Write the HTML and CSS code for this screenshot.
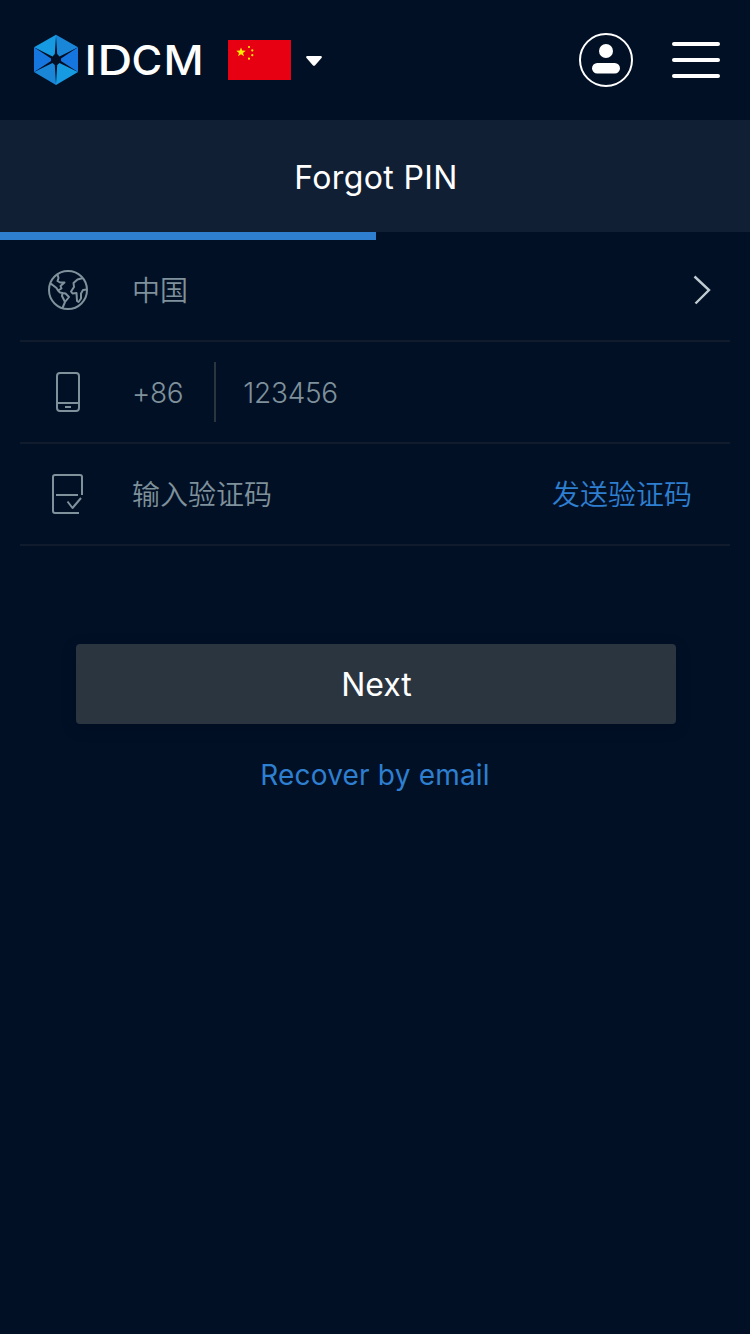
FILE: index.html
```html
<!DOCTYPE html>
<html lang="zh">
<head>
<meta charset="utf-8">
<title>Forgot PIN</title>
<link rel="stylesheet" href="styles.css">
</head>
<body>
<header class="header">
  <svg class="logo" width="172" height="52" viewBox="0 0 172 52">
    <path fill="#169be2" d="M24 .8V26L2 13.300Z"/>
    <path fill="#1a86d8" d="M24 .8L46 13.300L24 26Z"/>
    <path fill="#1676df" d="M2 13.300L24 26L2 38Z"/>
    <path fill="#1676df" d="M46 13.300L24 26L46 38Z"/>
    <path fill="#1a86d8" d="M24 51L2 38L24 26Z"/>
    <path fill="#169be2" d="M24 51L46 38L24 26Z"/>
    <path fill="#020f25" d="M24 2L25.200 20L27.500 22.500L45.500 13.500L29 24.500V27L45.500 37.800L27.500 29L25.200 31L24 50L22.800 31L20.500 29L2.500 37.800L19 27V24.500L2.500 13.500L20.500 22.500L22.800 20Z"/>
    <g class="wordmark">
      <text transform="translate(52.600 41) scale(1.1 1)">I</text>
      <text transform="translate(65.500 41) scale(1.16 1)">D</text>
      <text transform="translate(99.600 41) scale(1.01 1)">C</text>
      <text transform="translate(131.400 41) scale(1.06 1)">M</text>
    </g>
  </svg>
  <svg class="flag" width="63" height="40" viewBox="0 0 63 40">
    <path fill="#e60012" d="M0 0H63V40H0Z"/>
    <g fill="#ffec00">
      <path d="M13 7.500L14.200 10.600L17.700 10.700L15 12.900L16 16.200L13 14.300L10 16.200L11 12.900L8.300 10.700L11.800 10.600Z"/>
      <circle cx="21" cy="7" r="1.100"/><circle cx="24.300" cy="10.400" r="1.100"/><circle cx="24.300" cy="15.200" r="1.100"/><circle cx="21" cy="18.700" r="1.100"/>
    </g>
  </svg>
  <svg class="caret" width="16" height="11" viewBox="0 0 16 11"><path fill="#fff" d="M1 0H15Q16.500 .6 15.500 2L9.200 9.300Q8 10.400 6.800 9.300L.5 2Q-.5 .6 1 0Z"/></svg>
  <svg class="user" width="54" height="54" viewBox="0 0 54 54">
    <circle cx="27" cy="27" r="26" fill="none" stroke="#fff" stroke-width="2"/>
    <circle cx="27" cy="18" r="7" fill="#fff"/>
    <rect x="13" y="30" width="28" height="10.500" rx="5.250" fill="#fff"/>
  </svg>
  <div class="menu"><span></span><span></span><span></span></div>
</header>
<div class="title"><h1>Forgot PIN</h1></div>
<div class="progress"><div class="progress-bar"></div></div>
<main>
  <div class="row">
    <svg class="icon" width="40" height="40" viewBox="0 0 40 40">
      <circle cx="20" cy="20" r="19"/>
      <path d="M9.500 4.500L10.500 8L9.500 11L12 12.500L16.500 12.500L12.500 16L13.500 18.500L10 20.500L8.500 18L4 14.500L2 13.500M10 20.500L12 22.500L14.500 23L14 26L17 32L14.500 38M14.500 23L17.500 23.500L21 27L17 32M35 8L29.500 9.500L25.500 13L26 17L23 21.500L24.500 23.500L28.500 23L29 31L30.500 32L33 28.500L33 23.500L35 20L39 19.500"/>
    </svg>
    <span class="label">中国</span>
    <svg class="chevron" width="18" height="30" viewBox="0 0 18 30"><path d="M1.500 1.500L16 15L2.500 28.500"/></svg>
  </div>
  <div class="row">
    <svg class="icon" width="40" height="40" viewBox="0 0 40 40">
      <rect x="9" y="1" width="22" height="38" rx="3"/><path d="M9 31H31M17 35H23"/>
    </svg>
    <span class="label code">+86</span>
    <span class="divider"></span>
    <span class="label phone">123456</span>
  </div>
  <div class="row">
    <svg class="icon" width="40" height="40" viewBox="0 0 40 40">
      <path d="M31 39H7Q5 39 5 37V3Q5 1 7 1H32Q34 1 34 3V21M8 21H30M19.500 27.500L24.500 34L33 24"/>
    </svg>
    <span class="label">输入验证码</span>
    <span class="send">发送验证码</span>
  </div>
  <div class="button">Next</div>
  <div class="recover">Recover by email</div>
</main>
</body>
</html>
```
FILE: styles.css
```css
* { box-sizing: border-box; }
body {
  margin: 0;
  min-height: 1334px;
  background: #011025;
  color: #fff;
  font-family: Inter, "Noto Sans CJK SC", sans-serif;
}
svg { display: block; flex: none; }
.header { display: flex; align-items: center; height: 120px; padding: 0 30px 0 32px; }
.wordmark { fill: #fff; font: 500 41.5px Inter, sans-serif; }
.flag { margin-left: 24px; }
.caret { margin-left: 15px; margin-top: 2px; }
.user { margin-left: auto; }
.menu { display: flex; flex-direction: column; gap: 12px; width: 48px; margin-left: 39px; }
.menu span { height: 4px; border-radius: 2px; background: #fff; }
.title { display: flex; align-items: center; justify-content: center; height: 112px; background: #111f35; }
.title h1 { margin: 3px 0 0 2px; font-size: 32px; font-weight: 400; line-height: 40px; letter-spacing: .4px; }
.progress { height: 8px; }
.progress-bar { width: 376px; height: 8px; background: #2e7fd0; }
.row {
  display: flex;
  align-items: center;
  height: 102px;
  margin: 0 20px;
  padding: 0 19px 0 28px;
  border-bottom: 2px solid #101c2d;
}
.icon { fill: none; stroke: #7f919b; stroke-width: 2; stroke-linejoin: round; }
.label, .send { padding-bottom: 2px; font-family: "Noto Sans CJK SC", sans-serif; font-size: 28px; font-weight: 350; line-height: 40px; }
.label { margin-left: 44px; color: #7f919b; }
.send { margin-left: auto; margin-right: 19px; color: #2e7fd0; }
.chevron { margin-left: auto; fill: none; stroke: #c0cbd1; stroke-width: 2.4; }
.divider { width: 2px; height: 60px; margin-left: 31px; background: #2b3540; }
.code, .phone { padding: 1px 0 0; font-family: Inter, sans-serif; font-weight: 300; letter-spacing: -.3px; }
.phone { margin-left: 27px; }
.button {
  display: flex;
  align-items: center;
  justify-content: center;
  width: 600px;
  height: 80px;
  margin: 98px 0 0 76px;
  padding: 1px 0 0 1px;
  border-radius: 4px;
  background: #2b3540;
  box-shadow: 0 4px 16px rgba(0, 5, 25, .2);
  font-size: 32px;
  font-weight: 400;
}
.recover { margin-top: 31px; text-align: center; color: #2e7fd0; font-size: 28px; font-weight: 400; line-height: 40px; letter-spacing: .2px; }
```
